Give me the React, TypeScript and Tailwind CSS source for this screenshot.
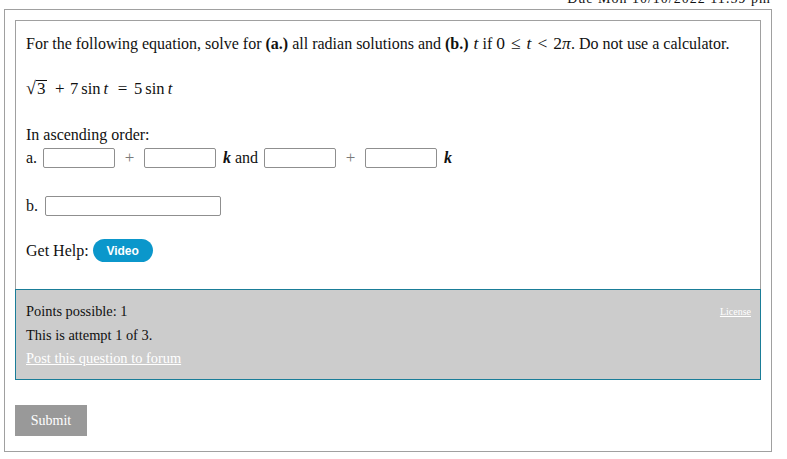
import React from 'react'

const serif = { fontFamily: '"Liberation Serif", "Times New Roman", serif' }

function Box({ w = 'w-[72px]' }: { w?: string }) {
  return <input type="text" className={`${w} h-[20px] border border-[#8f8f8f] rounded-[2px] bg-white px-1 text-[14px] outline-none`} />
}

function Plus() {
  return <span className="w-[29px] text-center text-[#7a7a7a] text-[17px]">+</span>
}

export default function App() {
  return (
    <div className="w-[787px] h-[459px] overflow-hidden bg-white text-[#111]" style={serif}>
      {/* due date line, cut off by the top edge */}
      <div className="h-[9px] overflow-hidden flex justify-end pr-[16px]">
        <div className="text-[14px] leading-[14px] -mt-[8px] tracking-[1px]">Due Mon 10/10/2022 11:59 pm</div>
      </div>

      <div className="ml-[4px] w-[768px] h-[443px] border border-[#a0a0a0] pl-[10px] pt-[10px]">
        <div className="w-[746px] border border-b-0 border-[#a0a0a0]">
          <div className="pl-[10px] pt-[12px] pb-[27px] text-[16px]">
            <p className="h-[20px] leading-[20px] flex items-baseline whitespace-pre [&>*]:leading-[20px]">
              <span>For the following equation, solve for <b>(a.)</b> all radian solutions and <b>(b.)</b></span>
              <i className="ml-[5px] text-[17.5px]">t</i>
              <span className="ml-[4px]">if</span>
              <span className="ml-[4px] text-[17.5px]">0</span>
              <span className="mx-[6px] text-[17.5px]">≤</span>
              <i className="text-[17.5px]">t</i>
              <span className="mx-[6px] text-[17.5px]">&lt;</span>
              <span className="text-[17.5px]">2<i>π</i></span>
              <span>. Do not use a calculator.</span>
            </p>

            <p className="mt-[25px] h-[20px] leading-[20px] text-[16.5px] flex items-baseline [&>*]:leading-[20px]">
              <span className="w-[26px] flex items-baseline">
                <span className="text-[18px]">√</span>
                <span className="border-t border-[#111] !leading-[16px] pl-[1px] pr-[2px] text-[17px]">3</span>
              </span>
              <span className="ml-[3px] w-[8px] text-center text-[17px]">+</span>
              <span className="ml-[7px]">7</span>
              <span className="ml-[3px]">sin</span>
              <i className="ml-[3px]">t</i>
              <span className="ml-[9px] w-[11px] text-center text-[17px]">=</span>
              <span className="ml-[6px]">5</span>
              <span className="ml-[3px]">sin</span>
              <i className="ml-[3px]">t</i>
            </p>

            <p className="mt-[27px] leading-[20px]">In ascending order:</p>

            <div className="mt-[3px] h-[20px] flex items-center">
              <span className="w-[17px]">a.</span>
              <Box />
              <Plus />
              <Box />
              <span className="ml-[7px] mr-[6px]"><i className="font-bold">k</i> and</span>
              <Box />
              <Plus />
              <Box />
              <i className="ml-[7px] font-bold">k</i>
            </div>

            <div className="mt-[28px] h-[20px] flex items-center">
              <span className="w-[19px]">b.</span>
              <Box w="w-[176px]" />
            </div>

            <div className="mt-[23px] h-[23px] flex items-center">
              <span>Get Help:</span>
              <button
                className="ml-[4px] w-[60px] h-[23px] rounded-full bg-[#0b97cb] text-white text-[12px] font-semibold"
                style={{ fontFamily: '"Liberation Sans", Arial, sans-serif' }}
              >
                Video
              </button>
            </div>
          </div>
        </div>

        <div className="w-[746px] h-[91px] border border-[#1a7d98] bg-[#cccccc] pl-[10px] pr-[9px] pt-[10px] text-[14.4px]">
          <div className="flex justify-between">
            <div className="leading-[23.5px]">
              <div>Points possible: 1</div>
              <div>This is attempt 1 of 3.</div>
              <a href="#" className="text-white underline">Post this question to forum</a>
            </div>
            <a href="#" className="text-white underline text-[10px] leading-[23px]">License</a>
          </div>
        </div>

        <button className="mt-[25px] w-[72px] h-[31px] bg-[#999999] text-white text-[14px]">Submit</button>
      </div>
    </div>
  )
}
